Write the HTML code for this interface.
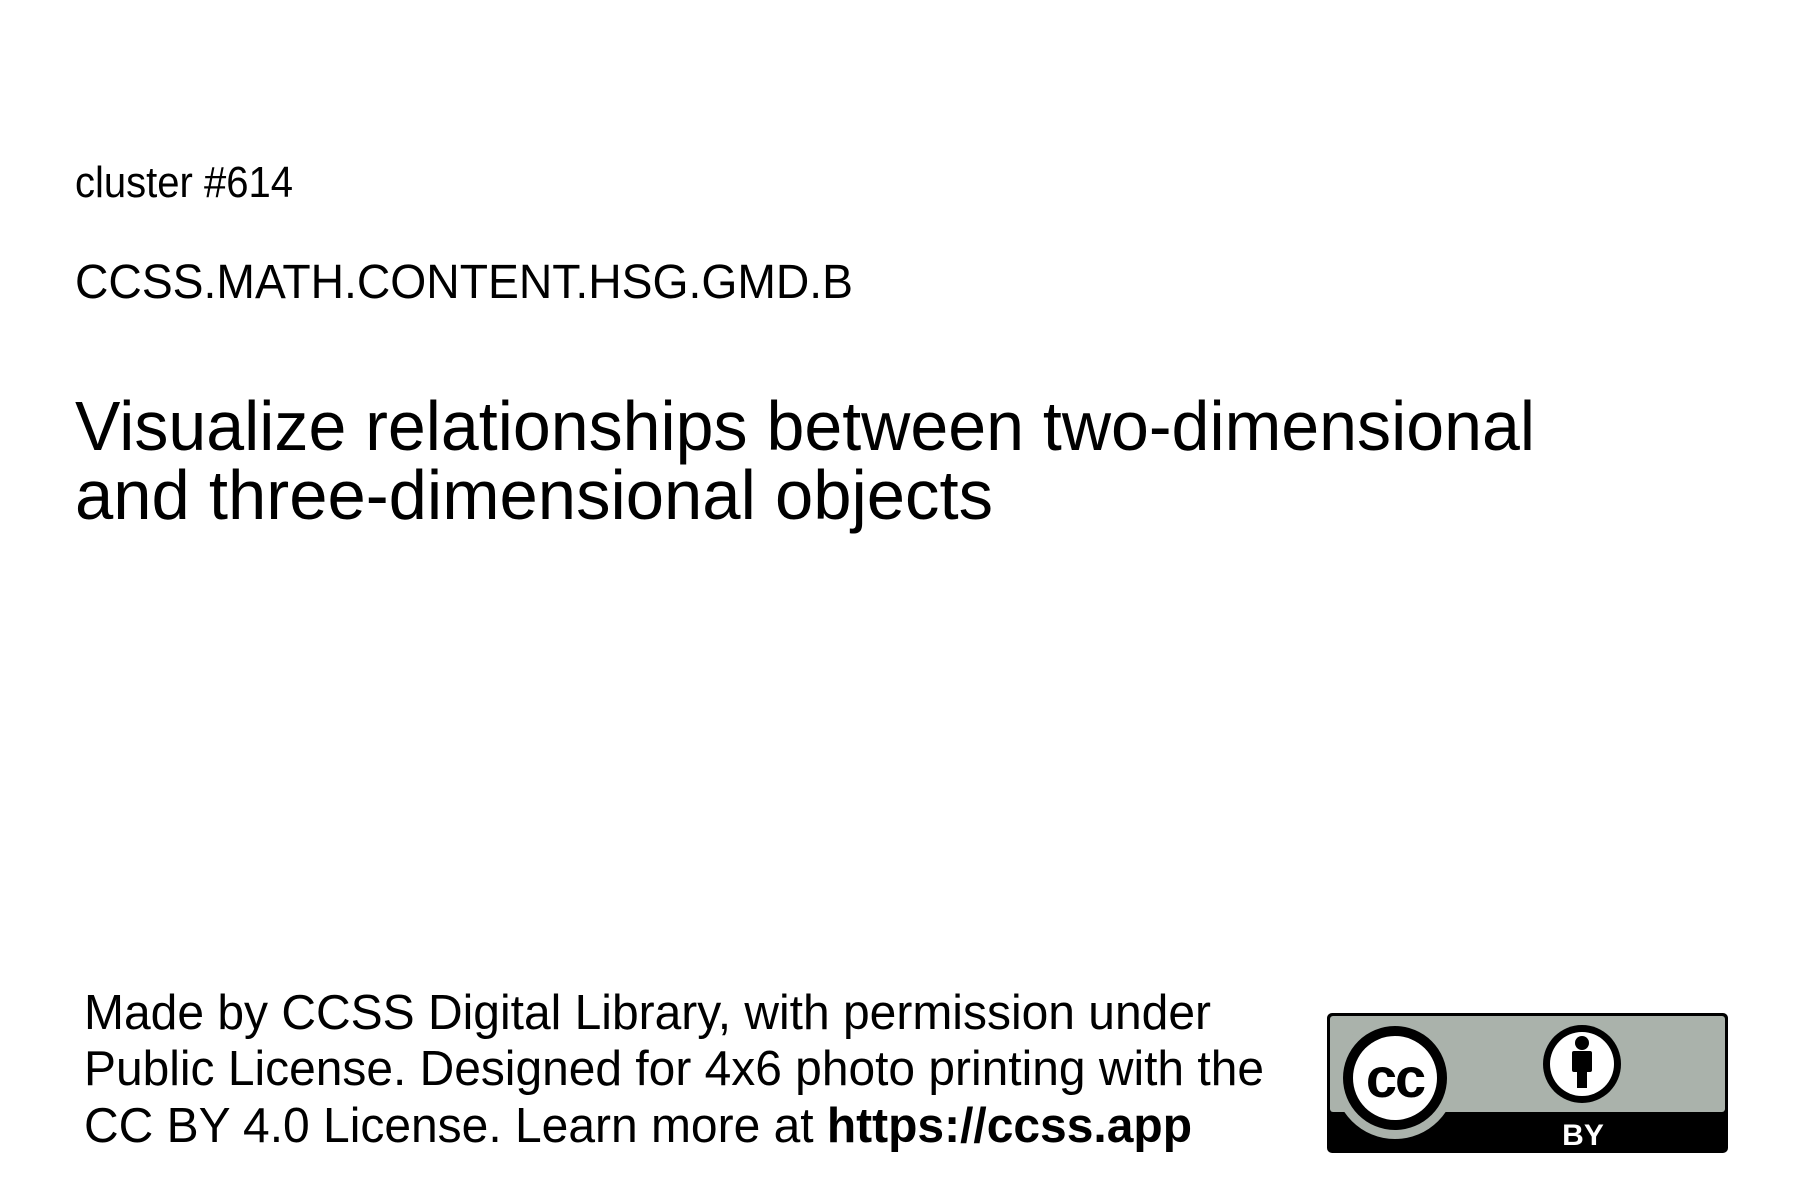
<!DOCTYPE html>
<html><head><meta charset="utf-8"><style>
html,body{margin:0;padding:0;background:#fff;width:1800px;height:1200px;overflow:hidden}
.t{position:absolute;white-space:nowrap;color:#000;font-family:"Liberation Sans",sans-serif;transform-origin:0 0;line-height:1}
</style></head><body>
<div class="t" id="a" style="left:75px;top:161px;font-size:44px">cluster #614</div>
<div class="t" id="b" style="left:75px;top:259px;font-size:48px">CCSS.MATH.CONTENT.HSG.GMD.B</div>
<div class="t" id="c" style="left:75px;top:391px;font-size:70px">Visualize relationships between two-dimensional</div>
<div class="t" id="d" style="left:75px;top:460px;font-size:70px">and three-dimensional objects</div>
<div class="t" id="e" style="left:84px;top:989px;font-size:49px">Made by CCSS Digital Library, with permission under</div>
<div class="t" id="f" style="left:84px;top:1045px;font-size:49px">Public License. Designed for 4x6 photo printing with the</div>
<div class="t" id="g" style="left:84px;top:1102px;font-size:49px">CC BY 4.0 License. Learn more at <b>https://ccss.app</b></div>
<svg style="position:absolute;left:0;top:0" width="1800" height="1200">
<defs><clipPath id="cl"><rect x="1327" y="1013" width="401" height="140" rx="5"/></clipPath></defs>
<rect x="1327" y="1013" width="401" height="140" rx="5" fill="#000"/>
<rect x="1330" y="1016" width="395" height="96" rx="3" fill="#aab2ab"/>
<g clip-path="url(#cl)">
<circle cx="1395" cy="1078" r="61" fill="#aab2ab"/>
</g>
<circle cx="1395" cy="1078" r="52" fill="#000"/>
<circle cx="1395" cy="1078" r="42" fill="#fff"/>
<text x="1395" y="1097" text-anchor="middle" font-family="Liberation Sans" font-weight="bold" font-size="56" fill="#000" letter-spacing="-2">cc</text>
<circle cx="1582" cy="1064" r="39" fill="#000"/>
<circle cx="1582" cy="1064" r="32" fill="#fff"/>
<circle cx="1582" cy="1043" r="7" fill="#000"/>
<rect x="1572" y="1051" width="20" height="21" rx="2" fill="#000"/>
<rect x="1577" y="1068" width="10" height="20" fill="#000"/>
<text x="1583" y="1145" text-anchor="middle" font-family="Liberation Sans" font-weight="bold" font-size="30" fill="#fff">BY</text>
</svg>
<script>
var W={a:218,b:778,c:1460,d:918,e:1127,f:1180,g:1108};
for(var k in W){var el=document.getElementById(k);var w=el.getBoundingClientRect().width;el.style.transform='scaleX('+(W[k]/w)+')';}
</script>
</body></html>
